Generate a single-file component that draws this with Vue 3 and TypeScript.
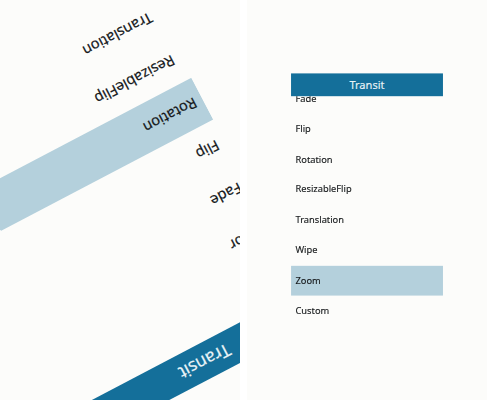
<script setup lang="ts">
interface Screen {
  mode: string
  selected: string
  items: string[]
}

const screens: Screen[] = [
  {
    mode: 'rotating',
    selected: 'Rotation',
    items: ['Blind', 'Color', 'Fade', 'Flip', 'Rotation', 'ResizableFlip', 'Translation'],
  },
  {
    mode: 'zooming',
    selected: 'Zoom',
    items: ['Fade', 'Flip', 'Rotation', 'ResizableFlip', 'Translation', 'Wipe', 'Zoom', 'Custom'],
  },
]
</script>

<template>
  <main class="stage">
    <section v-for="screen in screens" :key="screen.mode" class="viewport">
      <div class="page" :class="screen.mode">
        <header class="title">Transit</header>
        <div class="scroller">
          <ul class="list">
            <li
              v-for="item in screen.items"
              :key="item"
              class="row"
            >
              <span class="label" :class="{ selected: item === screen.selected }">{{ item }}</span>
            </li>
          </ul>
        </div>
      </div>
    </section>
  </main>
</template>

<style>
body {
  margin: 0;
  background: #fff;
}
</style>

<style scoped>
.stage {
  display: flex;
  gap: 7px;
  width: 487px;
  height: 400px;
  overflow: hidden;
  font-family: 'Noto Sans', 'Open Sans', sans-serif;
}
.viewport {
  flex: 0 0 240px;
  height: 400px;
  overflow: hidden;
  background: #fcfcfa;
}
.page {
  display: flex;
  flex-direction: column;
  width: 240px;
  height: 400px;
}
.rotating {
  transform: rotate(152.3deg);
}
.zooming {
  transform: scale(0.633);
}
.title {
  flex: 0 0 36px;
  line-height: 34px;
  text-align: center;
  font-size: 17.5px;
  color: #e9f4f7;
  background: #146f9a;
  -webkit-text-stroke: 0.2px #e9f4f7;
}
.zooming .title {
  line-height: 35px;
}
.scroller {
  flex: 1;
  min-height: 0;
  overflow: hidden;
}
.list {
  margin: 0;
  padding: 0;
  list-style: none;
}
.rotating .list {
  margin-top: 0.5px;
}
.zooming .list {
  margin-top: -19.1px;
}
.row {
  height: 47.85px;
}
.label {
  display: block;
  height: 47.4px;
  padding-left: 7px;
  line-height: 46px;
  font-size: 14.6px;
  color: #15181a;
  -webkit-text-stroke: 0.2px #15181a;
}
.zooming .label {
  line-height: 45px;
  font-size: 14.7px;
}
.selected {
  background: #b4d0dc;
}
</style>
